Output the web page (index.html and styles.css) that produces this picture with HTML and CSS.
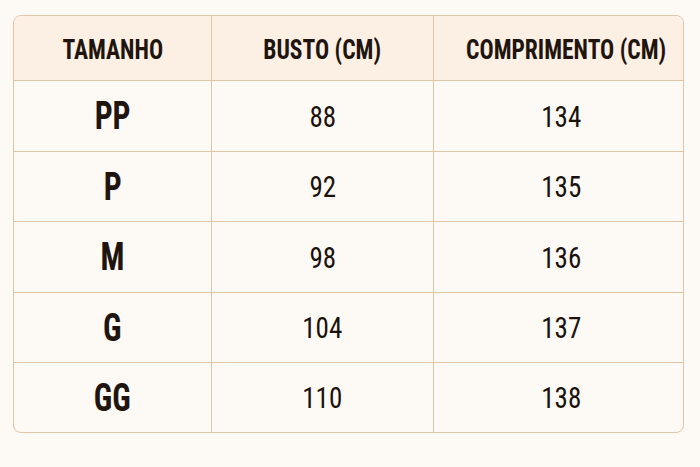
FILE: index.html
```html
<!DOCTYPE html>
<html lang="pt">
<head>
<meta charset="utf-8">
<title>Tabela de medidas</title>
<link rel="stylesheet" href="styles.css">
</head>
<body>
<div class="chart">
  <div class="cell head c1"><span class="txt">TAMANHO</span></div>
  <div class="cell head c2"><span class="txt">BUSTO (CM)</span></div>
  <div class="cell head c3"><span class="txt">COMPRIMENTO (CM)</span></div>

  <div class="cell size c1"><span class="txt">PP</span></div>
  <div class="cell num c2"><span class="txt">88</span></div>
  <div class="cell num c3"><span class="txt">134</span></div>

  <div class="cell size c1"><span class="txt">P</span></div>
  <div class="cell num c2"><span class="txt">92</span></div>
  <div class="cell num c3"><span class="txt">135</span></div>

  <div class="cell size c1"><span class="txt">M</span></div>
  <div class="cell num c2"><span class="txt">98</span></div>
  <div class="cell num c3"><span class="txt">136</span></div>

  <div class="cell size c1"><span class="txt">G</span></div>
  <div class="cell num c2"><span class="txt">104</span></div>
  <div class="cell num c3"><span class="txt">137</span></div>

  <div class="cell size c1 last"><span class="txt">GG</span></div>
  <div class="cell num c2 last"><span class="txt">110</span></div>
  <div class="cell num c3 last"><span class="txt">138</span></div>
</div>
</body>
</html>
```
FILE: styles.css
```css
html, body {
  margin: 0;
  padding: 0;
  background: #fdf9f5;
}
body {
  padding: 15px 0 0 13px;
  font-family: Roboto, "Liberation Sans", sans-serif;
  color: #1f150e;
}
.chart {
  width: 669px;
  border: 1px solid #e2c4a6;
  border-radius: 8px;
  overflow: hidden;
  display: grid;
  grid-template-columns: 198px 222px 249px;
  grid-template-rows: 65px 71px 70px 71px 70px 69px;
  background: #fdf9f5;
}
.cell {
  display: flex;
  align-items: center;
  justify-content: center;
  border-bottom: 1px solid #e2c4a6;
  border-right: 1px solid #e2c4a6;
  box-sizing: border-box;
  min-width: 0;
}
.cell.c3 { border-right: none; }
.cell.last { border-bottom: none; }
.txt {
  display: inline-block;
  white-space: nowrap;
}
.head {
  background: #fcefe3;
  font-size: 28px;
  font-weight: 700;
  font-stretch: 75%;
  padding-top: 2px;
}
.head .txt { transform: scaleX(0.84); }
.head.c3 { padding-left: 16px; }
.size {
  font-size: 38px;
  font-weight: 700;
  font-stretch: 75%;
}
.size .txt { transform: scaleX(0.83); }
.num {
  font-size: 30px;
  font-weight: 400;
  font-stretch: 75%;
  color: #1a110b;
}
.num .txt { transform: scaleX(0.9); }
.num.c3 { padding-left: 6px; }
```
